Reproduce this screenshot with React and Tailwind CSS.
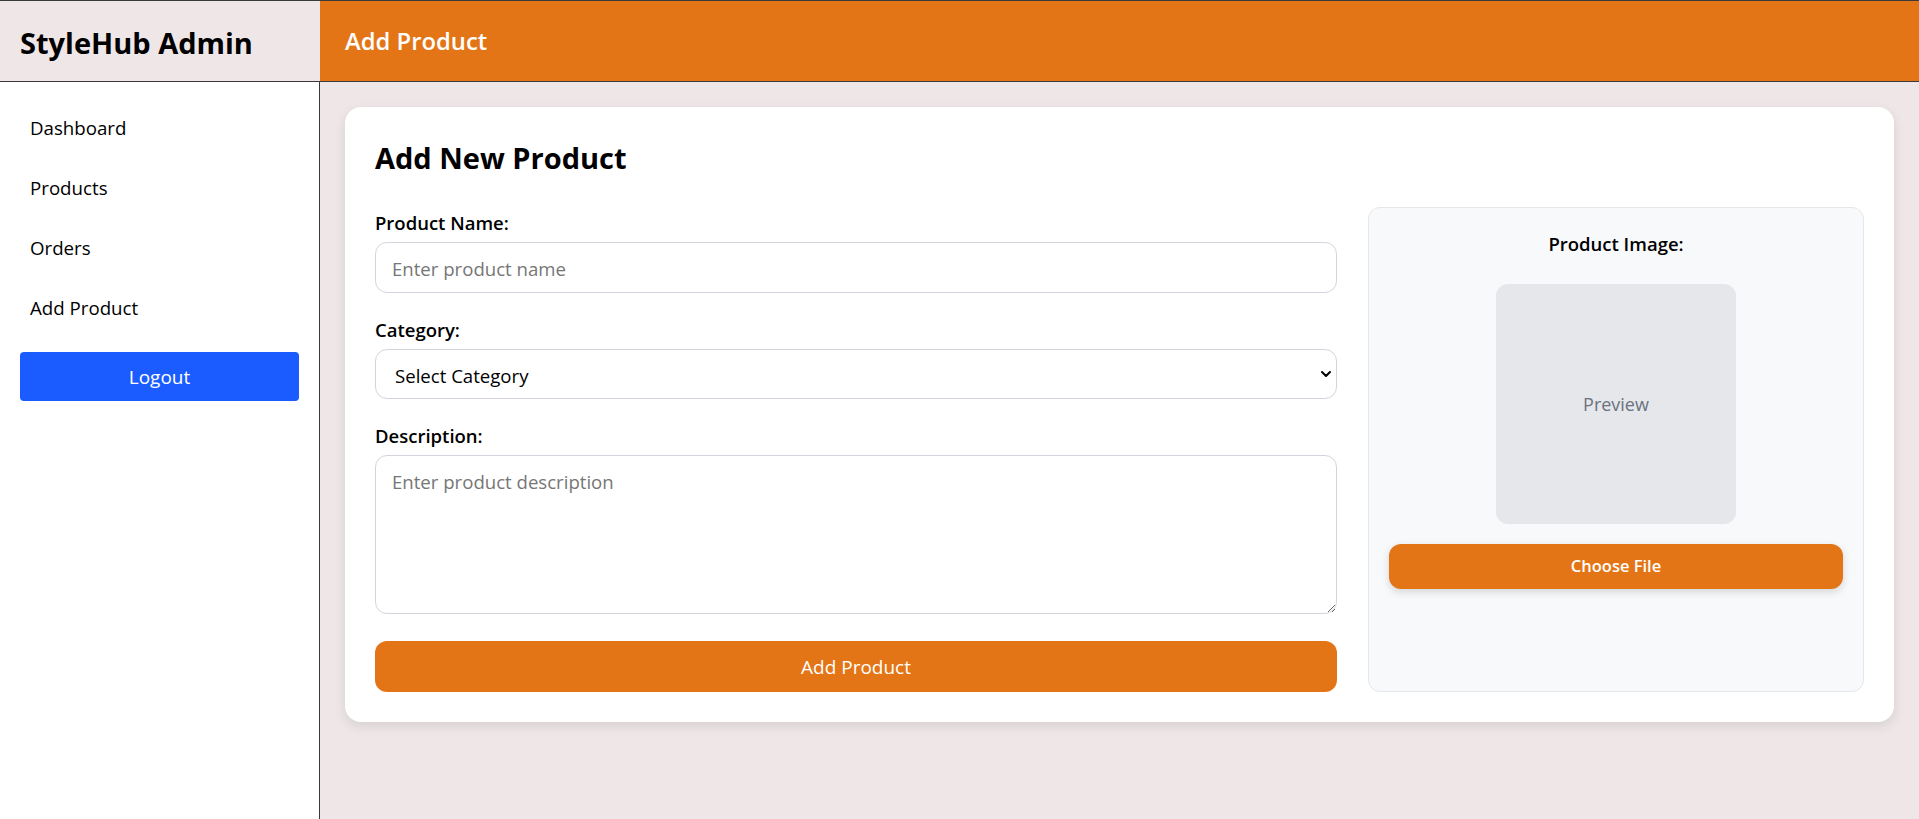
import React from 'react';

const navItems = ['Dashboard', 'Products', 'Orders', 'Add Product'];

const App = () => {
  return (
    <div className="min-h-screen flex flex-col bg-white text-black font-['Open_Sans',sans-serif]">
      {/* Top bar */}
      <div className="flex h-[82px] border-t border-b border-[#3a3a3a]">
        <div className="w-[320px] shrink-0 bg-[#efe7e7] px-5 flex items-center">
          <h1 className="text-[29px] font-bold leading-none pt-[2px]">StyleHub Admin</h1>
        </div>
        <div className="flex-1 bg-[#e47516] px-[25px] flex items-center">
          <h2 className="text-[23.8px] font-semibold text-white leading-none pt-[2px]">Add Product</h2>
        </div>
      </div>

      <div className="flex flex-1">
        {/* Sidebar */}
        <aside className="w-[320px] shrink-0 border-r border-[#3a3a3a] px-5 pt-[15px]">
          <nav className="flex flex-col">
            {navItems.map((item) => (
              <a key={item} href="#" className="h-[60px] flex items-center px-[10px] pt-[2px] text-[18.7px]">
                {item}
              </a>
            ))}
          </nav>
          <button className="mt-[15px] w-full h-[49px] rounded-[4px] bg-[#1a5cff] text-white text-[19px] pt-[2px]">
            Logout
          </button>
        </aside>

        {/* Main */}
        <main className="flex-1 bg-[#efe7e7] p-[25px]">
          <div className="bg-white rounded-[16px] shadow-[0_4px_12px_rgba(0,0,0,0.1)] p-[30px]">
            <h3 className="text-[29px] font-bold leading-[42px] mb-[28px]">Add New Product</h3>

            <div className="grid grid-cols-[1fr_496px] gap-[31px]">
              {/* Form */}
              <div className="flex flex-col">
                <label className="text-[18.5px] font-semibold leading-[32px] mb-[3px]">Product Name:</label>
                <input
                  type="text"
                  placeholder="Enter product name"
                  className="h-[51px] rounded-[12px] border border-[#d1d5db] px-4 pt-[2px] text-[18.6px] outline-none placeholder:text-[#767676]"
                />

                <label className="mt-[21px] text-[18.5px] font-semibold leading-[32px] mb-[3px]">Category:</label>
                <div className="relative">
                  <select className="w-full h-[50px] appearance-none rounded-[12px] border border-[#d1d5db] bg-white pl-[19px] pt-[3px] text-[18.6px] outline-none">
                    <option>Select Category</option>
                    <option>Men</option>
                    <option>Women</option>
                    <option>Kids</option>
                  </select>
                  <svg className="absolute right-[5px] top-1/2 -translate-y-1/2 w-[12px] h-[12px] pointer-events-none" viewBox="0 0 12 12" fill="none">
                    <path d="M2 4l4 4 4-4" stroke="#000" strokeWidth="2" strokeLinecap="round" strokeLinejoin="round" />
                  </svg>
                </div>

                <label className="mt-[21px] text-[18.5px] font-semibold leading-[32px] mb-[3px]">Description:</label>
                <textarea
                  placeholder="Enter product description"
                  className="h-[159px] rounded-[12px] border border-[#d1d5db] px-4 py-3 text-[18.6px] outline-none placeholder:text-[#767676]"
                />

                <button className="mt-[27px] h-[51px] rounded-[12px] bg-[#e47516] text-white text-[19px] pt-[2px]">
                  Add Product
                </button>
              </div>

              {/* Image panel */}
              <div className="rounded-[12px] border border-[#e5e7eb] bg-[#f8f9fb] p-5 flex flex-col items-center">
                <span className="text-[18.5px] font-semibold leading-[32px]">Product Image:</span>
                <div className="mt-[24px] w-[240px] h-[240px] rounded-[12px] bg-[#e5e7eb] flex items-center justify-center text-[18px] text-[#6b7280]">
                  Preview
                </div>
                <button className="mt-[20px] w-full h-[45px] rounded-[12px] bg-[#e47516] text-white text-[16.5px] font-semibold shadow-[0_3px_8px_rgba(0,0,0,0.15)]">
                  Choose File
                </button>
              </div>
            </div>
          </div>
        </main>
      </div>
    </div>
  );
};

export default App;
